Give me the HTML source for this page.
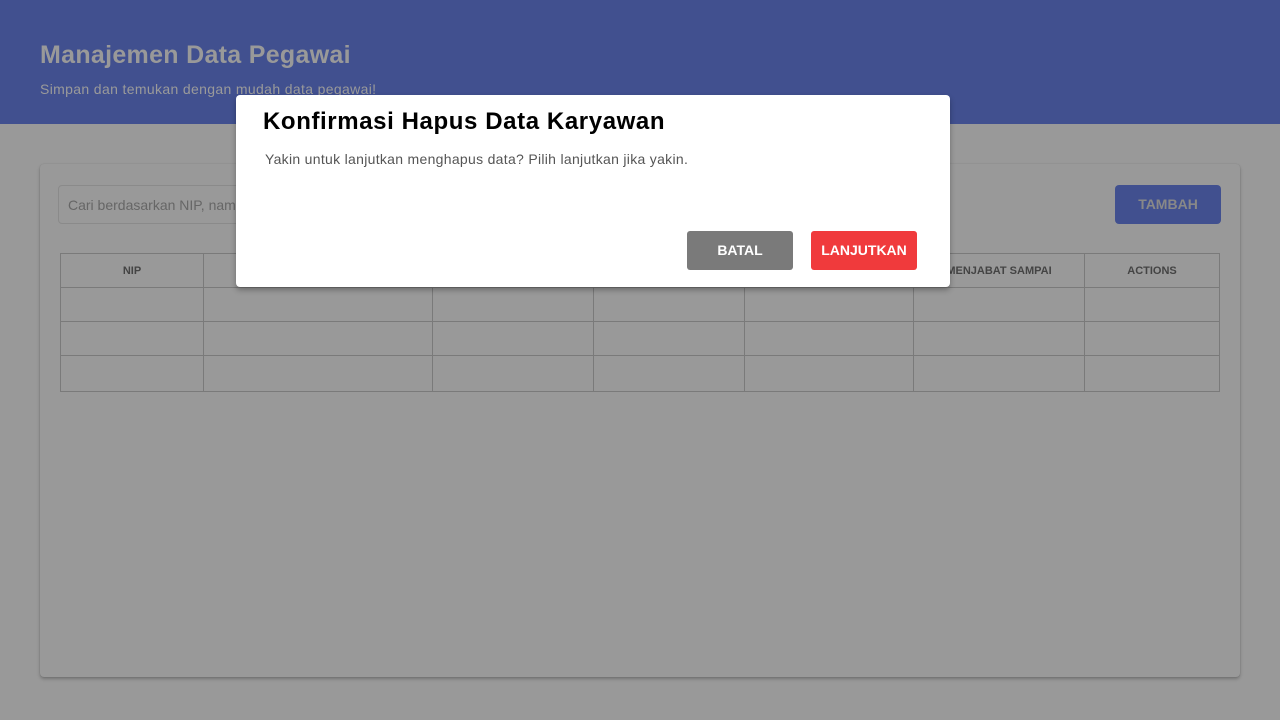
<!DOCTYPE html>
<html><head><meta charset="utf-8"><style>
*{box-sizing:border-box;margin:0;padding:0}
body{width:1280px;height:720px;overflow:hidden;background:#999;font-family:"Liberation Sans",sans-serif;position:relative}
.hdr{position:absolute;left:0;top:0;width:1280px;height:124px;background:#41508f}
.hdr h1{position:absolute;left:40px;top:41px;font-size:25px;font-weight:bold;color:#999;letter-spacing:0.3px}
.hdr p{position:absolute;left:40px;top:81px;font-size:14px;color:#9a9a9a;letter-spacing:0.35px}
.card{position:absolute;left:40px;top:164px;width:1200px;height:513px;background:#999;border-radius:4px;box-shadow:0 2px 3px rgba(0,0,0,.25),0 0 1px rgba(0,0,0,.15)}
.search{position:absolute;left:18px;top:21px;width:300px;height:39px;border:1px solid #8a8a8a;border-radius:4px;font-size:14px;color:#666;padding:11px 9px}
.tambah{position:absolute;left:1075px;top:21px;width:106px;height:39px;background:#41508f;border-radius:4px;color:#888;font-size:14px;font-weight:bold;text-align:center;line-height:39px}
table{position:absolute;left:20px;top:89px;width:1160px;border-collapse:collapse}
td,th{border:1px solid #7a7a7a;height:34px}
th{font-size:11px;color:#444;font-weight:bold}
.modal{position:absolute;left:236px;top:95px;width:714px;height:192px;background:#fff;border-radius:4px;box-shadow:0 3px 6px rgba(0,0,0,.3)}
.modal h2{position:absolute;left:27px;top:13px;font-size:24px;font-weight:bold;color:#000;letter-spacing:0.6px}
.modal p{position:absolute;left:29px;top:56px;font-size:14px;color:#555;letter-spacing:0.3px}
.btn{position:absolute;top:136px;height:39px;border-radius:3px;color:#fff;font-size:14px;font-weight:bold;text-align:center;line-height:39px}
</style></head><body>
<div class="hdr"><h1>Manajemen Data Pegawai</h1><p>Simpan dan temukan dengan mudah data pegawai!</p></div>
<div class="card">
<div class="search">Cari berdasarkan NIP, nama</div>
<div class="tambah">TAMBAH</div>
<table>
<tr><th style="width:143px">NIP</th><th style="width:229px"></th><th style="width:161px"></th><th style="width:151px"></th><th style="width:169px"></th><th style="width:171px">MENJABAT SAMPAI</th><th>ACTIONS</th></tr>
<tr><td></td><td></td><td></td><td></td><td></td><td></td><td></td></tr>
<tr><td></td><td></td><td></td><td></td><td></td><td></td><td></td></tr>
<tr><td style="height:36px"></td><td></td><td></td><td></td><td></td><td></td><td></td></tr>
</table>
</div>
<div class="modal">
<h2>Konfirmasi Hapus Data Karyawan</h2>
<p>Yakin untuk lanjutkan menghapus data? Pilih lanjutkan jika yakin.</p>
<div class="btn" style="left:451px;width:106px;background:#7a7a7a">BATAL</div>
<div class="btn" style="left:575px;width:106px;background:#f03a3c">LANJUTKAN</div>
</div>
</body></html>
